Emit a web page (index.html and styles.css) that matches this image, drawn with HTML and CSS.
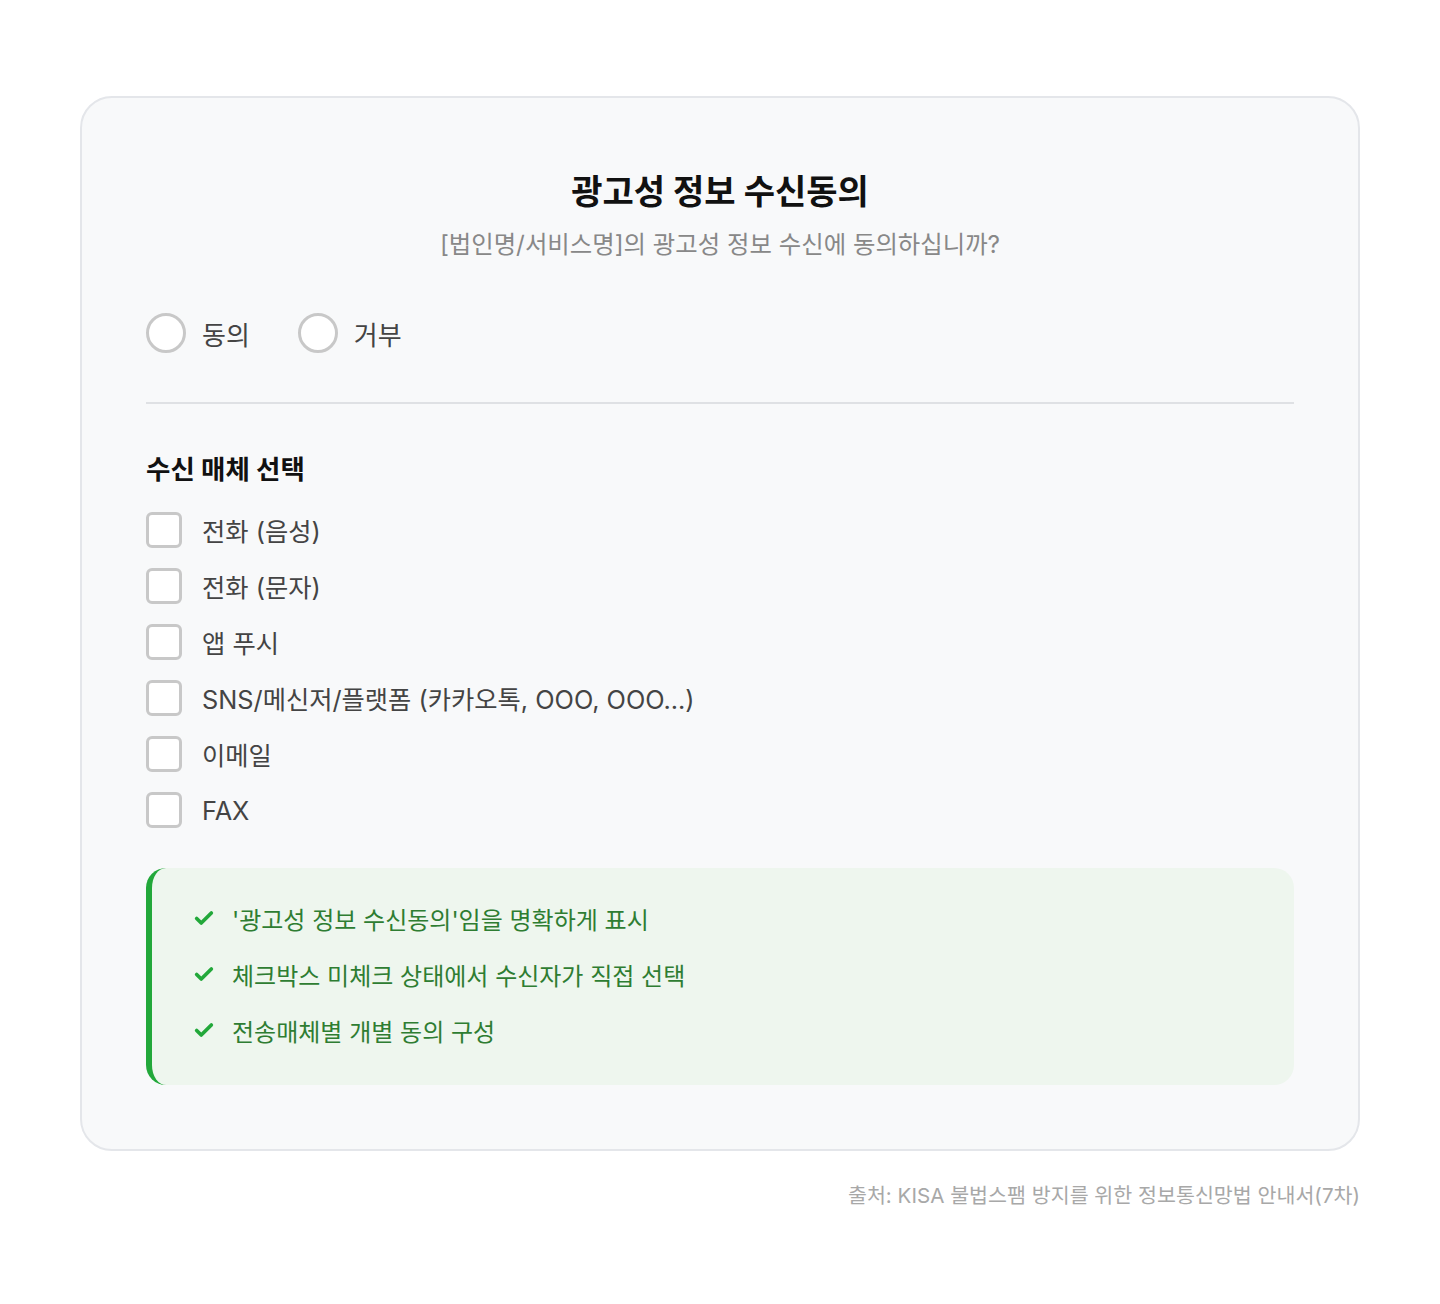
FILE: index.html
```html
<!doctype html>
<html lang="ko">
<head>
	<meta charset="utf-8">
	<meta name="viewport" content="width=device-width, initial-scale=1.0">
	<title>광고성 정보 수신동의</title>
	<link rel="stylesheet" href="styles.css">
</head>
<body>
	<div class="page">
		<div class="card">
			<div class="card-head">
				<h1>광고성 정보 수신동의</h1>
				<p class="subtitle">[법인명/서비스명]의 광고성 정보 수신에 동의하십니까?</p>
			</div>

			<div class="radio-group">
				<label class="radio"><span class="radio-mark"></span>동의</label>
				<label class="radio"><span class="radio-mark"></span>거부</label>
			</div>

			<hr class="divider">

			<h2 class="section-title">수신 매체 선택</h2>

			<ul class="check-list">
				<li class="check"><span class="check-mark"></span>전화 (음성)</li>
				<li class="check"><span class="check-mark"></span>전화 (문자)</li>
				<li class="check"><span class="check-mark"></span>앱 푸시</li>
				<li class="check"><span class="check-mark"></span>SNS/메신저/플랫폼 (카카오톡, OOO, OOO...)</li>
				<li class="check"><span class="check-mark"></span>이메일</li>
				<li class="check"><span class="check-mark"></span>FAX</li>
			</ul>

			<ul class="notes">
				<li class="note">
					<svg viewBox="0 0 24 24" class="note-icon"><path d="M4 12.5l5 5L20 6.5"></path></svg>
					'광고성 정보 수신동의'임을 명확하게 표시
				</li>
				<li class="note">
					<svg viewBox="0 0 24 24" class="note-icon"><path d="M4 12.5l5 5L20 6.5"></path></svg>
					체크박스 미체크 상태에서 수신자가 직접 선택
				</li>
				<li class="note">
					<svg viewBox="0 0 24 24" class="note-icon"><path d="M4 12.5l5 5L20 6.5"></path></svg>
					전송매체별 개별 동의 구성
				</li>
			</ul>
		</div>

		<p class="source">출처: KISA 불법스팸 방지를 위한 정보통신망법 안내서(7차)</p>
	</div>
</body>
</html>
```

FILE: styles.css
```css
* {
	box-sizing: border-box;
}

body {
	margin: 0;
	background: #fff;
	font-family: Inter, "Noto Sans CJK KR", sans-serif;
	color: #333;
}

.page {
	padding: 96px 80px 0 80px;
}

.card {
	background: #f8f9fa;
	border: 2px solid #e4e6ea;
	border-radius: 32px;
	padding: 70px 64px 64px 64px;
}

.card-head {
	text-align: center;
}

h1 {
	margin: 0;
	font-size: 34px;
	font-weight: 700;
	line-height: 48px;
	color: #111;
}

.subtitle {
	margin: 12px 0 0 0;
	font-size: 24.4px;
	line-height: 32px;
	color: #888;
}

.radio-group {
	display: flex;
	gap: 48px;
	margin-top: 53px;
}

.radio {
	display: flex;
	align-items: center;
	gap: 16px;
	font-size: 26px;
	color: #444;
}

.radio-mark {
	width: 40px;
	height: 40px;
	border: 3px solid #c8c8c8;
	border-radius: 50%;
	background: #fff;
}

.divider {
	margin: 49px 0 0 0;
	border: 0;
	border-top: 2px solid #dfe1e4;
}

.section-title {
	margin: 47px 0 0 0;
	font-size: 26.5px;
	font-weight: 700;
	line-height: 36px;
	color: #111;
}

.check-list {
	list-style: none;
	margin: 25px 0 0 0;
	padding: 0;
	display: flex;
	flex-direction: column;
	gap: 20px;
}

.check {
	display: flex;
	align-items: center;
	gap: 20px;
	height: 36px;
	font-size: 25.3px;
	color: #444;
}

.check-mark {
	width: 36px;
	height: 36px;
	border: 3px solid #c8c8c8;
	border-radius: 6px;
	background: #fff;
}

.notes {
	list-style: none;
	margin: 40px 0 0 0;
	padding: 32px 40px 37px 41px;
	background: #eef6ee;
	border-left: 6px solid #22a83a;
	border-radius: 20px;
	display: flex;
	flex-direction: column;
	gap: 20px;
}

.note {
	display: flex;
	align-items: center;
	gap: 17px;
	height: 36px;
	font-size: 24px;
	color: #2e7d32;
}

.note-icon {
	width: 22px;
	height: 22px;
	fill: none;
	stroke: #22a83a;
	stroke-width: 4;
	stroke-linecap: round;
	stroke-linejoin: round;
}

.source {
	margin: 28px 0 0 0;
	text-align: right;
	font-size: 20.6px;
	color: #a8a8a8;
}
```
